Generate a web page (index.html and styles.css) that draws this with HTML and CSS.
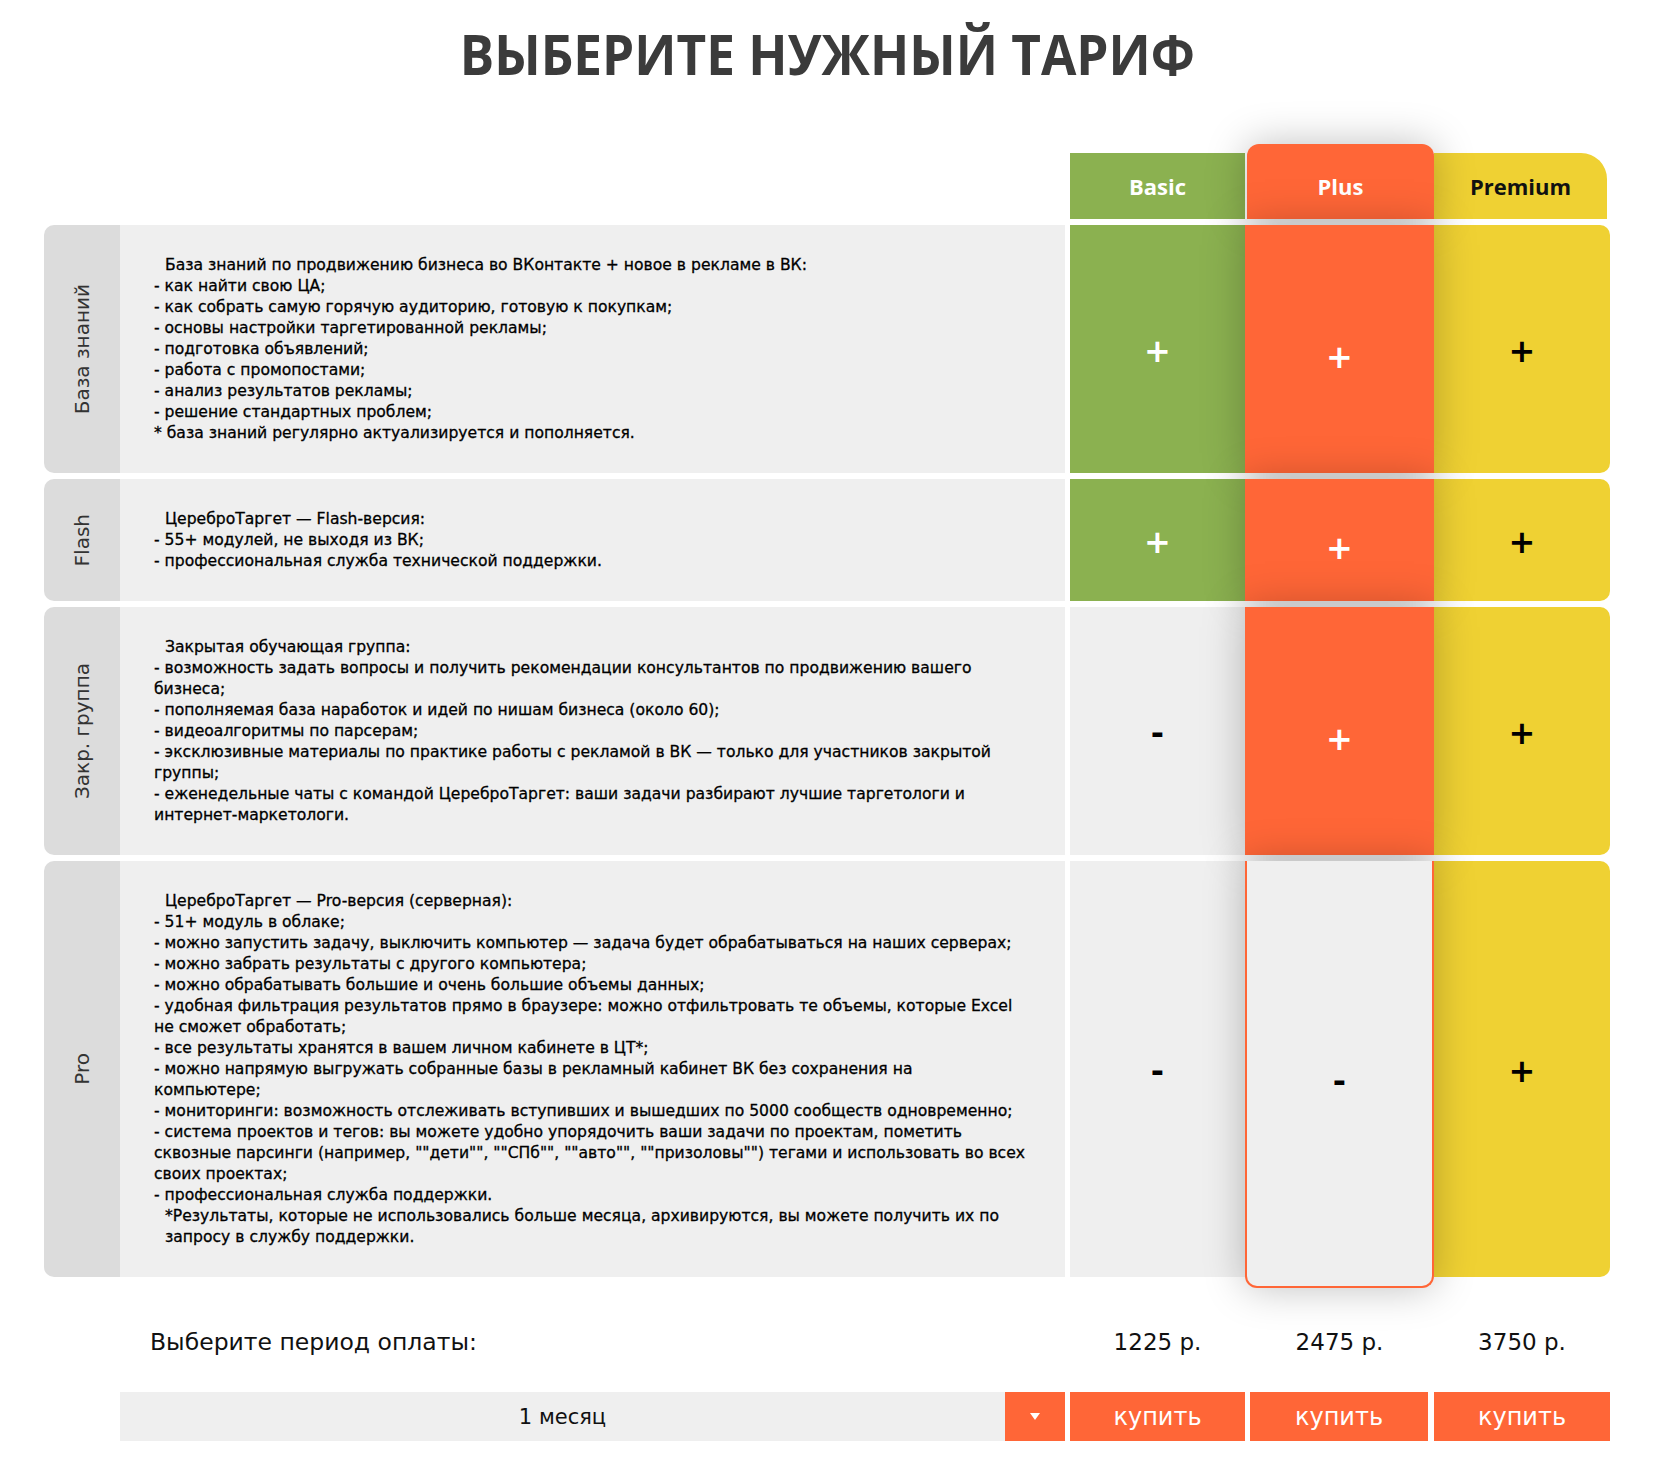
FILE: index.html
```html
<!DOCTYPE html>
<html lang="ru">
<head>
<meta charset="utf-8">
<title>Выберите нужный тариф</title>
<link rel="stylesheet" href="styles.css">
</head>
<body>
<h1 class="title"><span class="title-text">ВЫБЕРИТЕ НУЖНЫЙ ТАРИФ</span></h1>

<div class="table">
  <div class="row head">
    <div class="spacer"></div>
    <div class="hcell basic">Basic</div>
    <div class="hcell plus">Plus</div>
    <div class="hcell premium">Premium</div>
  </div>

  <div class="row">
    <div class="label"><span>База знаний</span></div>
    <div class="desc"><span class="indent">База знаний по продвижению бизнеса во ВКонтакте + новое в рекламе в ВК:</span>- как найти свою ЦА;<br>- как собрать самую горячую аудиторию, готовую к покупкам;<br>- основы настройки таргетированной рекламы;<br>- подготовка объявлений;<br>- работа с промопостами;<br>- анализ результатов рекламы;<br>- решение стандартных проблем;<br>* база знаний регулярно актуализируется и пополняется.</div>
    <div class="cell basic">+</div>
    <div class="cell plus">+</div>
    <div class="cell premium">+</div>
  </div>

  <div class="row">
    <div class="label"><span>Flash</span></div>
    <div class="desc"><span class="indent">ЦереброТаргет — Flash-версия:</span>- 55+ модулей, не выходя из ВК;<br>- профессиональная служба технической поддержки.</div>
    <div class="cell basic">+</div>
    <div class="cell plus">+</div>
    <div class="cell premium">+</div>
  </div>

  <div class="row">
    <div class="label"><span>Закр. группа</span></div>
    <div class="desc"><span class="indent">Закрытая обучающая группа:</span>- возможность задать вопросы и получить рекомендации консультантов по продвижению вашего<br>бизнеса;<br>- пополняемая база наработок и идей по нишам бизнеса (около 60);<br>- видеоалгоритмы по парсерам;<br>- эксклюзивные материалы по практике работы с рекламой в ВК — только для участников закрытой<br>группы;<br>- еженедельные чаты с командой ЦереброТаргет: ваши задачи разбирают лучшие таргетологи и<br>интернет-маркетологи.</div>
    <div class="cell none">-</div>
    <div class="cell plus">+</div>
    <div class="cell premium">+</div>
  </div>

  <div class="row">
    <div class="label"><span>Pro</span></div>
    <div class="desc"><span class="indent">ЦереброТаргет — Pro-версия (серверная):</span>- 51+ модуль в облаке;<br>- можно запустить задачу, выключить компьютер — задача будет обрабатываться на наших серверах;<br>- можно забрать результаты с другого компьютера;<br>- можно обрабатывать большие и очень большие объемы данных;<br>- удобная фильтрация результатов прямо в браузере: можно отфильтровать те объемы, которые Excel<br>не сможет обработать;<br>- все результаты хранятся в вашем личном кабинете в ЦТ*;<br>- можно напрямую выгружать собранные базы в рекламный кабинет ВК без сохранения на<br>компьютере;<br>- мониторинги: возможность отслеживать вступивших и вышедших по 5000 сообществ одновременно;<br>- система проектов и тегов: вы можете удобно упорядочить ваши задачи по проектам, пометить<br>сквозные парсинги (например, ""дети"", ""СПб"", ""авто"", ""призоловы"") тегами и использовать во всех<br>своих проектах;<br>- профессиональная служба поддержки.<span class="indent">*Результаты, которые не использовались больше месяца, архивируются, вы можете получить их по<br>запросу в службу поддержки.</span></div>
    <div class="cell none">-</div>
    <div class="cell plus empty">-</div>
    <div class="cell premium">+</div>
  </div>
</div>

<div class="prices">
  <div class="period">Выберите период оплаты:</div>
  <div class="price">1225 р.</div>
  <div class="price">2475 р.</div>
  <div class="price">3750 р.</div>
</div>

<div class="buy">
  <div class="select">
    <div class="select-value">1 месяц</div>
    <div class="select-arrow"><span class="tri"></span></div>
  </div>
  <div class="btn">купить</div>
  <div class="btn mid">купить</div>
  <div class="btn">купить</div>
</div>
</body>
</html>
```
FILE: styles.css
```css
html, body {
  margin: 0;
  padding: 0;
  background: #ffffff;
}

body {
  font-family: "DejaVu Sans", Verdana, sans-serif;
  color: #111;
  width: 1665px;
}

.title {
  margin: 25px 0 63px;
  font-family: "Open Sans", "Noto Sans", sans-serif;
  font-weight: 700;
  font-size: 56px;
  line-height: 56px;
  color: #3b3b3b;
  text-align: center;
}

.title-text {
  display: inline-block;
  transform: scaleX(0.916);
  transform-origin: 50% 50%;
  position: relative;
  left: -5px;
}

.table {
  display: flex;
  flex-direction: column;
  gap: 6px;
  margin-left: 44px;
  width: 1566px;
}

.row {
  display: grid;
  grid-template-columns: 76px 950px 175px 189px 176px;
}

.head {
  height: 75px;
  align-items: end;
}

.head .spacer {
  grid-column: 1 / 3;
}

.hcell {
  height: 66px;
  display: flex;
  align-items: center;
  justify-content: center;
  font-family: "Open Sans", "Noto Sans", sans-serif;
  font-weight: 700;
  font-size: 22px;
}

.hcell.basic {
  background: #8bb150;
  color: #fff;
}

.hcell.plus {
  height: 75px;
  box-sizing: border-box;
  padding-top: 9px;
  margin-left: 2px;
  background: #ff6637;
  color: #fff;
  border-radius: 12px 12px 0 0;
}

.hcell.premium {
  background: #efd133;
  color: #111;
  margin-right: 3px;
  border-radius: 0 26px 0 0;
}

.label {
  background: #dcdcdc;
  border-radius: 10px 0 0 10px;
  display: flex;
  align-items: center;
  justify-content: center;
}

.label span {
  writing-mode: vertical-rl;
  transform: rotate(180deg);
  font-size: 20px;
  color: #333;
  white-space: nowrap;
}

.desc {
  background: #efefef;
  margin-right: 5px;
  padding: 30px 0 29px 34px;
  font-size: 15.6px;
  line-height: 21px;
  white-space: nowrap;
  color: #000;
  -webkit-text-stroke: 0.3px #000;
}

.indent {
  display: block;
  padding-left: 11px;
}

.cell {
  display: flex;
  align-items: center;
  justify-content: center;
  padding-top: 4px;
  font-size: 32px;
  font-weight: 700;
}

.cell.basic {
  background: #8bb150;
  color: #fff;
}

.cell.none {
  background: #efefef;
  color: #000;
}

.hcell.plus,
.cell.plus {
  position: relative;
  z-index: 1;
  box-shadow: 0 0 40px rgba(0, 0, 0, 0.25);
}

.cell.plus {
  background: #ff6637;
  color: #fff;
  padding-top: 15px;
}

.cell.plus.empty {
  background: #efefef;
  color: #000;
  border: 2px solid #ff6637;
  border-top: none;
  border-radius: 0 0 12px 12px;
  margin-bottom: -11px;
}

.cell.premium {
  background: #efd133;
  color: #000;
  border-radius: 0 10px 10px 0;
}

.prices {
  display: grid;
  grid-template-columns: 1026px 175px 189px 176px;
  margin: 45px 0 0 44px;
  height: 40px;
  align-items: center;
  font-size: 23px;
}

.period {
  padding-left: 106px;
  font-size: 23.5px;
}

.price {
  text-align: center;
}

.buy {
  display: grid;
  grid-template-columns: 950px 175px 189px 176px;
  margin: 30px 0 0 120px;
  height: 49px;
}

.select {
  display: flex;
  margin-right: 5px;
}

.select-value {
  flex: 1;
  background: #efefef;
  display: flex;
  align-items: center;
  justify-content: center;
  font-size: 21px;
  color: #111;
}

.select-arrow {
  width: 60px;
  background: #ff6637;
  display: flex;
  align-items: center;
  justify-content: center;
}

.tri {
  width: 0;
  height: 0;
  border-left: 5px solid transparent;
  border-right: 5px solid transparent;
  border-top: 7px solid #fff;
}

.btn {
  background: #ff6637;
  color: #fff;
  font-size: 24px;
  display: flex;
  align-items: center;
  justify-content: center;
}

.btn.mid {
  margin: 0 6px 0 5px;
}
```
